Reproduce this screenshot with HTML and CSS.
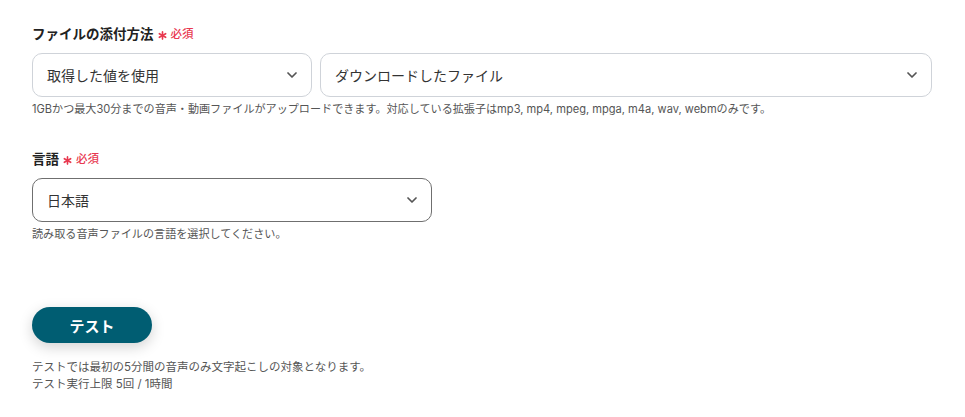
FILE: index.html
```html
<!DOCTYPE html>
<html lang="ja">
<head>
<meta charset="utf-8">
<link rel="stylesheet" href="styles.css">
</head>
<body>
<div class="page">
  <section class="field">
    <div class="label">ファイルの添付方法<span class="req"><svg class="ast" viewBox="0 0 10 10" width="9" height="9"><g stroke="#e8384f" stroke-width="1.8" stroke-linecap="round"><path d="M5 1 V9"/><path d="M1.5 3 L8.5 7"/><path d="M1.5 7 L8.5 3"/></g></svg>必須</span></div>
    <div class="row">
      <div class="select sel-a">
        <span>取得した値を使用</span>
        <svg class="chev" viewBox="0 0 10 6" width="10" height="6"><path d="M1 1 L5 5 L9 1" fill="none" stroke="#555" stroke-width="1.7" stroke-linecap="round" stroke-linejoin="round"/></svg>
      </div>
      <div class="select sel-b">
        <span>ダウンロードしたファイル</span>
        <svg class="chev" viewBox="0 0 10 6" width="10" height="6"><path d="M1 1 L5 5 L9 1" fill="none" stroke="#555" stroke-width="1.7" stroke-linecap="round" stroke-linejoin="round"/></svg>
      </div>
    </div>
    <p class="help">1GBかつ最大30分までの音声・動画ファイルがアップロードできます。対応している拡張子はmp3, mp4, mpeg, mpga, m4a, wav, webmのみです。</p>
  </section>

  <section class="field field-lang">
    <div class="label">言語<span class="req"><svg class="ast" viewBox="0 0 10 10" width="9" height="9"><g stroke="#e8384f" stroke-width="1.8" stroke-linecap="round"><path d="M5 1 V9"/><path d="M1.5 3 L8.5 7"/><path d="M1.5 7 L8.5 3"/></g></svg>必須</span></div>
    <div class="select sel-lang">
      <span>日本語</span>
      <svg class="chev" viewBox="0 0 10 6" width="10" height="6"><path d="M1 1 L5 5 L9 1" fill="none" stroke="#555" stroke-width="1.7" stroke-linecap="round" stroke-linejoin="round"/></svg>
    </div>
    <p class="help">読み取る音声ファイルの言語を選択してください。</p>
  </section>

  <button class="test-btn">テスト</button>
  <div class="notes">
    <p>テストでは最初の5分間の音声のみ文字起こしの対象となります。</p>
    <p>テスト実行上限 5回 / 1時間</p>
  </div>
</div>
</body>
</html>
```
FILE: styles.css
```css
* { box-sizing: border-box; }
html, body { margin: 0; padding: 0; background: #fff; }
body {
  font-family: Inter, "Noto Sans CJK JP", sans-serif;
  color: #222;
}
.page {
  width: 965px;
  padding: 24px 33px 0 32px;
}
.label {
  font-size: 13.5px;
  font-weight: 700;
  line-height: 20px;
  color: #222;
  display: flex;
  align-items: center;
}
.req {
  color: #e8384f;
  font-size: 11.5px;
  font-weight: 500;
  margin-left: 4px;
  display: inline-flex;
  align-items: center;
}
.ast {
  display: block;
  margin-right: 4px;
  margin-top: 2px;
}
.row {
  display: flex;
  gap: 8px;
  margin-top: 9px;
}
.select {
  height: 44px;
  border: 1px solid #cfd3d9;
  border-radius: 10px;
  display: flex;
  align-items: center;
  justify-content: space-between;
  padding: 0 14px 0 14px;
  font-size: 14px;
  color: #333;
  background: #fff;
}
.sel-a { width: 280px; }
.sel-b { flex: 1; }
.chev { display: block; }
.help {
  margin: 4px 0 0;
  font-size: 11.1px;
  line-height: 16px;
  color: #555;
}
.field-lang { margin-top: 32px; }
.sel-lang {
  width: 400px;
  margin-top: 9px;
  border-color: #6f6f6f;
}
.test-btn {
  display: block;
  margin-top: 65px;
  width: 120px;
  height: 36px;
  border: none;
  border-radius: 18px;
  background: #005d72;
  color: #fff;
  font-family: Inter, "Noto Sans CJK JP", sans-serif;
  font-size: 15px;
  font-weight: 700;
  box-shadow: 0 4px 14px rgba(0, 0, 0, 0.18);
}
.notes {
  margin-top: 16px;
  font-size: 11.5px;
  line-height: 17px;
  color: #555;
}
.notes p { margin: 0; }
```
